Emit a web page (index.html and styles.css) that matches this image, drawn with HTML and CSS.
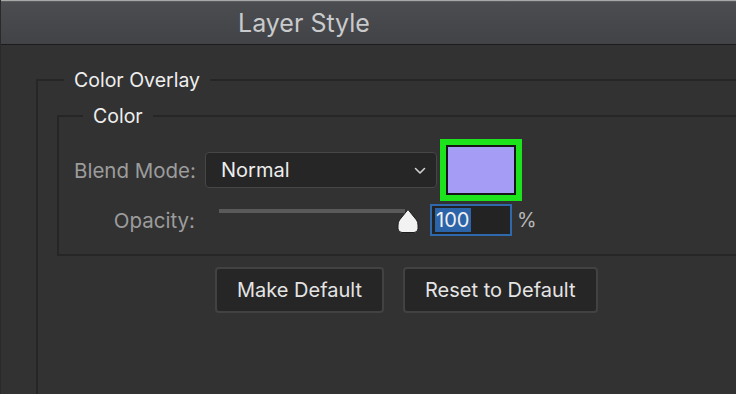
FILE: index.html
```html
<!DOCTYPE html>
<html lang="en">
<head>
    <meta charset="UTF-8">
    <meta name="viewport" content="width=device-width, initial-scale=1.0">
    <title>Layer Style</title>
    <link rel="stylesheet" href="styles.css">
</head>
<body>
    <div class="window">
        <!-- Title bar -->
        <div class="titlebar">
            <span class="title">Layer Style</span>
        </div>

        <div class="content">
            <fieldset class="group outer">
                <legend>Color Overlay</legend>

                <fieldset class="group inner">
                    <legend>Color</legend>

                    <div class="row">
                        <label class="field-label">Blend Mode:</label>
                        <div class="select">
                            <span>Normal</span>
                            <svg class="chevron" width="12" height="8" viewBox="0 0 12 8">
                                <path d="M1.5 1.5 L6 6 L10.5 1.5" fill="none" stroke="#d0d0d0" stroke-width="1.6" stroke-linecap="round" stroke-linejoin="round"/>
                            </svg>
                        </div>
                        <div class="swatch-wrap">
                            <div class="swatch"></div>
                        </div>
                    </div>

                    <div class="row">
                        <label class="field-label">Opacity:</label>
                        <div class="slider">
                            <div class="track"></div>
                            <svg class="thumb" width="22" height="26" viewBox="0 0 22 26">
                                <path d="M11 1.5 L19.5 12 Q21 14 21 17 V20.5 Q21 24.5 17 24.5 H5 Q1 24.5 1 20.5 V17 Q1 14 2.5 12 Z" fill="#f2f2f2" stroke="#1e1e1e" stroke-width="1"/>
                            </svg>
                        </div>
                        <div class="num-input"><span class="sel">100</span></div>
                        <span class="unit">%</span>
                    </div>
                </fieldset>

                <div class="buttons">
                    <button>Make Default</button>
                    <button>Reset to Default</button>
                </div>
            </fieldset>
        </div>
    </div>
</body>
</html>
```

FILE: styles.css
```css
html, body {
    margin: 0;
    padding: 0;
    height: 100%;
    overflow: hidden;
}
body {
    background-color: #323232;
    font-family: Inter, "Liberation Sans", sans-serif;
    color: #e6e6e6;
}
.window {
    height: 100%;
    box-sizing: border-box;
    border-left: 1px solid #2a2a2a;
    display: flex;
    flex-direction: column;
}
.titlebar {
    height: 43px;
    flex-shrink: 0;
    display: flex;
    align-items: center;
    padding-left: 237px;
    background: linear-gradient(#4b4d51, #414347);
    border-top: 1px solid #a8a8a8;
    border-bottom: 1px solid #1c1c1c;
    box-shadow: inset 0 1px 0 #5a5c60;
}
.title {
    font-size: 25px;
    color: #c9cacc;
}
.content {
    flex: 1;
    display: flex;
    flex-direction: column;
    padding-left: 35px;
    padding-top: 23px;
}
.group {
    border: 2px solid #262626;
    margin: 0;
    min-width: 0;
}
.group legend {
    color: #eeeeee;
    font-size: 19.5px;
    padding: 0 10px;
}
.outer {
    flex: 1;
    padding: 12px 0 0 19px;
    border-right: none;
    border-bottom: none;
}
.outer > legend {
    margin-left: 7px;
}
.inner {
    padding: 11px 0 18px 15px;
    border-right: none;
}
.inner > legend {
    margin-left: 9px;
}
.row {
    display: flex;
    align-items: center;
}
.row + .row {
    margin-top: 3px;
}
.field-label {
    width: 121px;
    text-align: right;
    color: #9c9c9c;
    font-size: 20.5px;
    margin-right: 10px;
    white-space: nowrap;
}
.select {
    width: 232px;
    height: 36px;
    box-sizing: border-box;
    background-color: #262626;
    border: 1px solid #464646;
    border-radius: 4px;
    display: flex;
    align-items: center;
    justify-content: space-between;
    padding: 0 10px 0 15px;
    font-size: 20px;
    color: #ededed;
}
.chevron {
    margin-top: 2px;
}
.swatch-wrap {
    margin-left: 3px;
    width: 82px;
    height: 62px;
    box-sizing: border-box;
    border: 6px solid #1de31d;
    background-color: #151515;
    padding: 2px;
}
.swatch {
    height: 100%;
    background-color: #a59cf6;
}
.slider {
    width: 200px;
    height: 32px;
    margin-left: 14px;
    position: relative;
}
.track {
    position: absolute;
    left: 0;
    right: 14px;
    top: 5px;
    height: 4px;
    background-color: #5a5a5a;
}
.thumb {
    position: absolute;
    right: 0;
    top: 4px;
}
.num-input {
    margin-left: 11px;
    width: 82px;
    height: 32px;
    box-sizing: border-box;
    border: 2px solid #2f68ad;
    background-color: #232323;
    padding: 2px 3px;
    display: flex;
}
.sel {
    background-color: #2b64a9;
    color: #f0f0f0;
    font-size: 20px;
    line-height: 24px;
    padding: 0 2px 0 1px;
}
.unit {
    margin-left: 5px;
    color: #b8b8b8;
    font-size: 20px;
}
.buttons {
    display: flex;
    gap: 19px;
    margin-top: 11px;
    padding-left: 158px;
}
button {
    height: 46px;
    padding: 0 20px;
    background-color: #262626;
    color: #e4e4e4;
    border: 2px solid #424242;
    border-radius: 4px;
    font-family: inherit;
    font-size: 20px;
}
```
